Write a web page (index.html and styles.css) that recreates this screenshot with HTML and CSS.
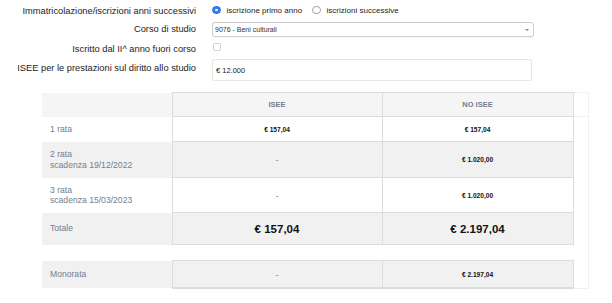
FILE: index.html
```html
<!DOCTYPE html>
<html lang="it">
<head>
<meta charset="utf-8">
<link rel="stylesheet" href="styles.css">
</head>
<body>
<form class="form">
  <div class="row row-radio">
    <label class="lbl">Immatricolazione/iscrizioni anni successivi</label>
    <div class="ctrl radios">
      <span class="radio checked"></span><span class="rtext">iscrizione primo anno</span>
      <span class="radio second"></span><span class="rtext">iscrizioni successive</span>
    </div>
  </div>
  <div class="row row-select">
    <label class="lbl">Corso di studio</label>
    <div class="ctrl">
      <div class="select"><span>9076 - Beni culturali</span><span class="caret"></span></div>
    </div>
  </div>
  <div class="row row-check">
    <label class="lbl">Iscritto dal II^ anno fuori corso</label>
    <div class="ctrl"><span class="check"></span></div>
  </div>
  <div class="row row-input">
    <label class="lbl">ISEE per le prestazioni sul diritto allo studio</label>
    <div class="ctrl"><div class="input">€ 12.000</div></div>
  </div>
</form>

<table class="rates">
  <colgroup>
    <col class="c-lbl"><col class="c-isee"><col class="c-noisee"><col class="c-pad">
  </colgroup>
  <tr class="head">
    <th class="lab"></th><th class="val">ISEE</th><th class="val">NO ISEE</th><th class="pad"></th>
  </tr>
  <tr class="r1">
    <td class="lab">1 rata</td><td class="val">€ 157,04</td><td class="val">€ 157,04</td><td class="pad"></td>
  </tr>
  <tr class="r2 grey">
    <td class="lab">2 rata<br>scadenza 19/12/2022</td><td class="val dash">-</td><td class="val">€ 1.020,00</td><td class="pad"></td>
  </tr>
  <tr class="r3">
    <td class="lab">3 rata<br>scadenza 15/03/2023</td><td class="val dash">-</td><td class="val">€ 1.020,00</td><td class="pad"></td>
  </tr>
  <tr class="tot grey">
    <td class="lab">Totale</td><td class="val big">€ 157,04</td><td class="val big">€ 2.197,04</td><td class="pad"></td>
  </tr>
  <tr class="gap">
    <td></td><td></td><td></td><td class="pad"></td>
  </tr>
  <tr class="mono grey">
    <td class="lab">Monorata</td><td class="val dash">-</td><td class="val">€ 2.197,04</td><td class="pad"></td>
  </tr>
</table>
</body>
</html>
```

FILE: styles.css
```css
html, body {
  margin: 0;
  padding: 0;
  background: #ffffff;
}
body {
  font-family: "Liberation Sans", Arial, Helvetica, sans-serif;
  color: #222;
  width: 612px;
  height: 303px;
  overflow: hidden;
}
.form {
  padding-top: 3px;
}
.row {
  display: grid;
  grid-template-columns: 196px 1fr;
  column-gap: 16px;
  align-items: start;
}
.lbl {
  text-align: right;
  font-size: 9.3px;
  line-height: 11px;
  color: #222;
  white-space: nowrap;
}
.row-radio { height: 14px; align-items: center; }
.row-radio .lbl { padding-top: 3px; }
.row-select { height: 15px; margin-top: 5px; }
.row-select .lbl { padding-top: 2px; }
.row-check { height: 12px; margin-top: 5px; }
.row-check .lbl { padding-top: 1.5px; }
.row-input { height: 22px; margin-top: 5px; }
.row-input .lbl { padding-top: 3.5px; }

.radios {
  display: flex;
  align-items: center;
}
.radio {
  width: 6.5px;
  height: 6.5px;
  border-radius: 50%;
  border: 0.5px solid #a5a5a5;
  background: #fff;
  margin-right: 6px;
  flex: none;
}
.radio.checked {
  border: 0.5px solid #2a6fe0;
  background: radial-gradient(circle, #ffffff 0 1px, #2f7ff5 1.4px);
}
.radio.second {
  margin-left: 10px;
}
.rtext {
  font-size: 8px;
  color: #222;
}
.select {
  height: 13px;
  border: 1px solid #cdcdcd;
  border-radius: 3px;
  display: flex;
  align-items: center;
  justify-content: space-between;
  padding: 0 4px 0 2px;
  box-sizing: content-box;
  width: 314px;
  font-size: 7px;
  color: #333;
  background: #fff;
  box-shadow: 0 0.5px 0.5px rgba(0,0,0,0.06);
}
.caret {
  width: 0;
  height: 0;
  border-left: 2px solid transparent;
  border-right: 2px solid transparent;
  border-top: 2.5px solid #8a8a8a;
}
.check {
  display: block;
  width: 6px;
  height: 6px;
  border: 0.5px solid #d0d0d0;
  border-radius: 1.5px;
  margin-top: 0.5px;
  margin-left: 1px;
  background: #fff;
}
.input {
  border: 1px solid #e6e6e6;
  border-radius: 2px;
  font-size: 7.5px;
  color: #222;
  display: flex;
  align-items: center;
  padding-left: 3px;
  padding-top: 1px;
  box-sizing: border-box;
  height: 22px;
  width: 320px;
}

.rates {
  margin-top: 11px;
  margin-left: 42px;
  border-collapse: collapse;
  table-layout: fixed;
  width: 546px;
}
.c-lbl { width: 130px; }
.c-isee { width: 210px; }
.c-noisee { width: 191px; }
.c-pad { width: 15px; }

.rates td, .rates th {
  padding: 0;
  font-size: 8px;
}
.rates .lab {
  text-align: left;
  padding-left: 8px;
  color: #718090;
  font-size: 8.6px;
  line-height: 10.5px;
}
.rates .val {
  text-align: center;
  border: 1px solid #dcdcdc;
  font-size: 6.6px;
  font-weight: bold;
  color: #111;
}
.rates .pad {
  border-right: 1px solid #f1f1f1;
}
.head th {
  height: 23px;
  background: #f5f5f5;
  font-weight: bold;
  color: #718090;
  font-size: 7.5px;
}
.head .pad {
  background: #fff;
  border-bottom: 1px solid #f1f1f1;
  border-top: 1px solid #f4f4f4;
}
.head .val {
  color: #718090;
  font-size: 7.5px;
}
.r1 td { height: 24px; }
.r2 td { height: 35px; }
.r3 td { height: 34px; }
.tot td { height: 31px; }
.gap td { height: 15px; }
.mono td { height: 26px; }
.grey .lab, .grey .val { background: #f1f1f1; }
.val.dash {
  font-weight: normal;
  color: #666;
  font-size: 8px;
}
.val.big {
  font-size: 11.5px;
  font-weight: bold;
}
.gap td { border: none; }
.gap .pad { border-right: 1px solid #f1f1f1; }
.mono .val { border-bottom: 2px solid #dcdcdc; }
.mono .pad { border-bottom: 1px solid #f1f1f1; }
```
